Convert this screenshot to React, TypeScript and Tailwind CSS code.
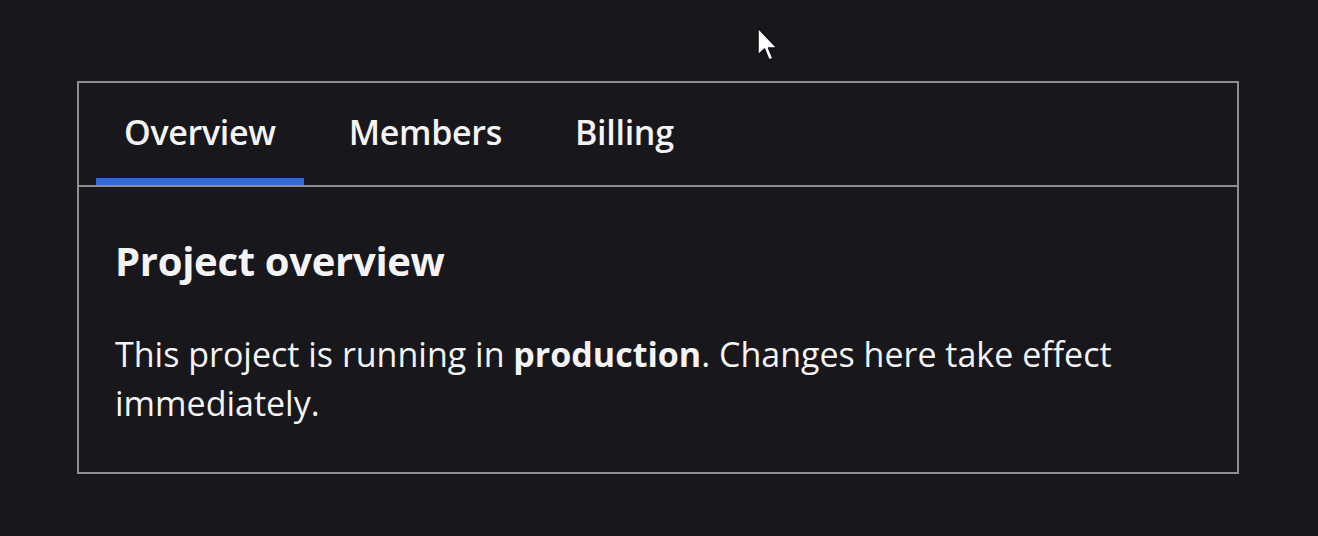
import React from "react";

export default function App() {
  const tabs = ["Overview", "Members", "Billing"];
  return (
    <div
      className="relative w-[1318px] h-[536px] bg-[#18171c] text-[#f4f4f5] overflow-hidden pt-[81px] pl-[77px]"
      style={{ fontFamily: '"Open Sans", "Noto Sans", sans-serif' }}
    >
      <div className="w-[1162px] h-[393px] border-2 border-[#8e8e92]">
        <div className="flex items-end h-[104px] border-b-2 border-[#8e8e92] pl-[17px] gap-[17px]">
          {tabs.map((t, i) => (
            <div key={t} className="flex flex-col items-stretch h-full">
              <div className="flex-1 flex items-center px-[28px] pt-[4px] text-[34px] font-semibold tracking-[-0.3px]">
                {t}
              </div>
              <div className={i === 0 ? "h-[7px] bg-[#2f6be0]" : "h-[7px]"} />
            </div>
          ))}
        </div>
        <div className="px-[36px] pt-[48px]">
          <h1 className="text-[40px] font-bold leading-[52px] tracking-[-0.3px]">Project overview</h1>
          <p className="mt-[43px] text-[34px] leading-[49px]">
            This project is running in <strong className="font-bold">production</strong>. Changes here take effect
            immediately.
          </p>
        </div>
      </div>
      <svg
        className="absolute left-[756px] top-[26px]"
        width="26"
        height="38"
        viewBox="0 0 26 38"
      >
        <path d="M2 2 L2 29 L8.5 23 L13 34 L17 32.5 L12.5 22 L21 22 Z" fill="#ffffff" stroke="#111" strokeWidth="1.5" strokeLinejoin="round" />
      </svg>
    </div>
  );
}
